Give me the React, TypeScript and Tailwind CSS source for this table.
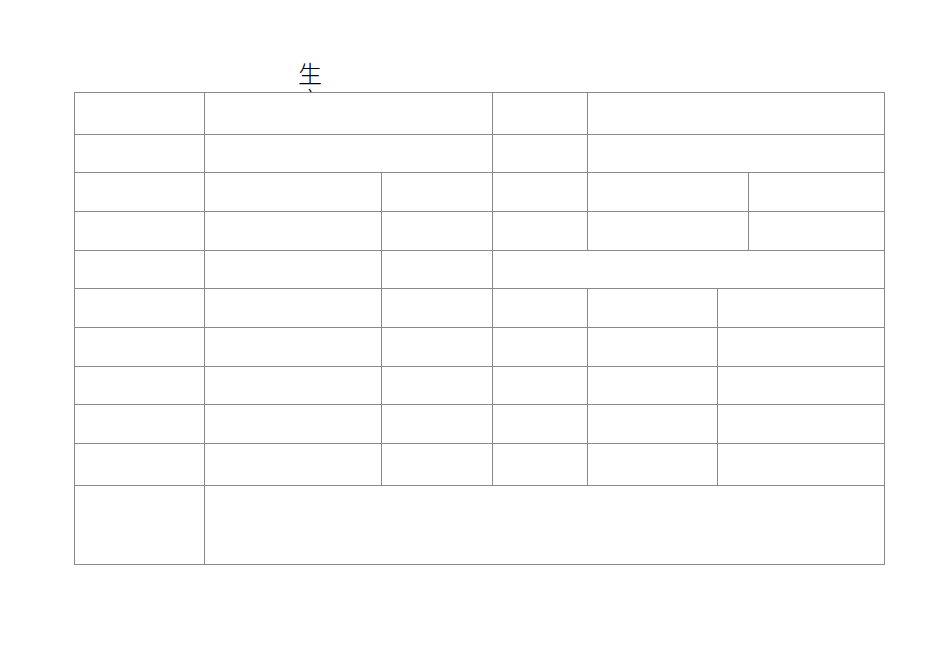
import React from 'react'

// column lines at x = 74, 204, 381, 492, 587, 717, 748, 884
const cols = 'grid-cols-[129px_176px_110px_94px_129px_30px_135px]'
const rows = 'grid-rows-[41px_37px_38px_38px_37px_38px_38px_37px_38px_41px_78px]'

// spans for each row, in grid columns (7 total)
const layout: number[][] = [
  [1, 2, 1, 3],
  [1, 2, 1, 3],
  [1, 1, 1, 1, 2, 1],
  [1, 1, 1, 1, 2, 1],
  [1, 1, 1, 4],
  [1, 1, 1, 1, 1, 2],
  [1, 1, 1, 1, 1, 2],
  [1, 1, 1, 1, 1, 2],
  [1, 1, 1, 1, 1, 2],
  [1, 1, 1, 1, 1, 2],
  [1, 6],
]

const spanClass: Record<number, string> = {
  1: 'col-span-1',
  2: 'col-span-2',
  3: 'col-span-3',
  4: 'col-span-4',
  6: 'col-span-6',
}

export default function App() {
  return (
    <div className="w-[950px] h-[672px] bg-white pt-[60px] pl-[74px] font-['Noto_Sans_CJK_SC',sans-serif]">
      {/* title, clipped by the table top */}
      <div className="h-[32px] overflow-hidden pl-[224px]">
        <div className="w-[24px] text-[24px] leading-[26px] font-light text-black">生产</div>
      </div>

      {/* form grid */}
      <div className={`grid ${cols} ${rows} gap-px bg-[#8a8a8a] border border-[#8a8a8a] w-[811px]`}>
        {layout.map((row, r) =>
          row.map((span, c) => <div key={`${r}-${c}`} className={`${spanClass[span]} bg-white`} />)
        )}
      </div>
    </div>
  )
}
